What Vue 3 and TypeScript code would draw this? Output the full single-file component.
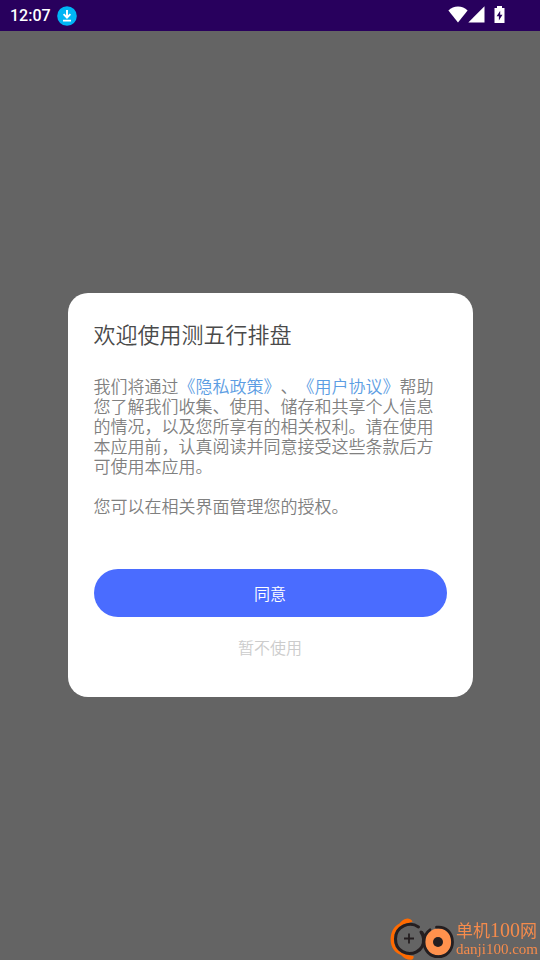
<script setup lang="ts">
import { ref } from 'vue'

const title = '欢迎使用测五行排盘'
const time = ref('12:07')
const open = ref(true)
</script>

<template>
  <div class="screen">
    <header class="status">
      <div class="status-group">
        <span class="time">{{ time }}</span>
        <svg class="download" viewBox="0 0 20 20" aria-hidden="true">
          <circle cx="10" cy="10" r="9.8" fill="#00b5f5" />
          <path d="M10 4v7M6.600 8.200L10 11.600l3.400-3.400M6 14.600h8" fill="none" stroke="#fff" stroke-width="1.900" />
        </svg>
      </div>
      <div class="status-group icons">
        <svg class="wifi" viewBox="0 0 20 17" aria-hidden="true">
          <path d="M10 16.500L.4 4.600C3 2 6.300 .6 10 .6s7 1.400 9.600 4z" fill="#fff" />
        </svg>
        <svg class="signal" viewBox="0 0 17 17" aria-hidden="true">
          <path d="M16.500 .3v16.200H.3z" fill="#fff" />
        </svg>
        <svg class="battery" viewBox="0 0 11 17" aria-hidden="true">
          <path d="M3 0h5v2h2.500v15H.5V2H3z" fill="#fff" />
          <path d="M6.200 4.800L2.600 10.300h2.300v4.200l3.600-5.700H6.200z" fill="#28005d" />
        </svg>
      </div>
    </header>

    <main class="backdrop">
      <section v-if="open" class="dialog" role="dialog" aria-labelledby="dialog-title">
        <h1 id="dialog-title">{{ title }}</h1>
        <p>我们将通过<a href="#privacy">《隐私政策》</a>、<a href="#terms">《用户协议》</a>帮助您了解我们收集、使用、储存和共享个人信息的情况，以及您所享有的相关权利。请在使用本应用前，认真阅读并同意接受这些条款后方可使用本应用。</p>
        <p>您可以在相关界面管理您的授权。</p>
        <button class="agree" type="button" @click="open = false">同意</button>
        <button class="decline" type="button" @click="open = false">暂不使用</button>
      </section>
    </main>

    <aside class="watermark">
      <svg class="logo" viewBox="0 0 66 42" aria-hidden="true">
        <path d="M22.500 3.500C20.500 .3 17.500 0 14.500 1.300 12.500 2.200 11 3.800 9.500 5.500 3.500 8.500 .6 14.500 .6 21.500c0 7.500 4.200 13.500 10.400 15.500 3.500 3.500 6.500 5 10 4.800 2-.2 3-1.800 2.500-3.800-2.500-.4-5.500-1-8.500-2C8 34 3.900 28.500 3.900 21.500c0-7 3.600-12.500 10.100-15.500 3-.9 6-1 8.500-2.500z" fill="#ff6a00" />
        <path d="M28.500 9C20 3 5.500 8 5.500 21c0 12 12 17.500 21 12.800C31 31.500 34 27 33.500 21c-.2-3-1.200-5.200-2.500-7" fill="none" stroke="#241e20" stroke-width="3" stroke-linecap="round" />
        <path d="M19 15.500v10M14 20.500h10" fill="none" stroke="#241e20" stroke-width="1.800" />
        <circle cx="48.500" cy="24" r="13.500" fill="#ff914d" />
        <path d="M46.500 9.200C56 8 62.500 15 62.500 24c0 8.300-6 14.700-14.300 14.700S34 32.300 34 24c0-5 2-9.500 6-12.200M32 14.500l2.500 4" fill="none" stroke="#241e20" stroke-width="2.800" stroke-linecap="round" />
        <circle cx="48" cy="24" r="5" fill="#241e20" />
      </svg>
      <div class="brand">
        <span class="brand-name">单机<span class="brand-number">100</span>网</span>
        <span class="brand-site">danji100.com</span>
      </div>
    </aside>
  </div>
</template>

<style>
body {
  margin: 0;
}
</style>

<style scoped>
.screen {
  display: flex;
  flex-direction: column;
  min-height: 100vh;
  background: #646464;
  font-family: 'Noto Sans CJK SC', sans-serif;
  font-weight: 350;
  text-spacing-trim: space-all;
}

.status {
  display: flex;
  align-items: center;
  justify-content: space-between;
  box-sizing: border-box;
  height: 31px;
  padding: 0 35px 0 10px;
  background: #28005d;
}

.status-group {
  display: flex;
  align-items: center;
  gap: 6px;
}

.icons {
  gap: 0;
  padding-bottom: 2px;
}

.time {
  color: #fff;
  font: 500 16px/31px Roboto, sans-serif;
}

.download {
  width: 20px;
  height: 20px;
}

.wifi {
  width: 20px;
  height: 17px;
}

.signal {
  width: 17px;
  height: 17px;
}

.battery {
  width: 11px;
  height: 17px;
  margin-left: 9px;
}

.backdrop {
  display: flex;
  flex: 1;
  align-items: center;
  justify-content: center;
  padding-bottom: 2px;
}

.dialog {
  display: flex;
  flex-direction: column;
  box-sizing: border-box;
  width: 75%;
  padding: 24px 26px 34px;
  border-radius: 20px;
  background: #fff;
}

h1 {
  margin: 0 0 27px;
  color: #4a4a4a;
  font-size: 22px;
  font-weight: inherit;
  line-height: 32px;
}

p {
  margin: 0 0 20px;
  color: #808080;
  font-size: 17px;
  line-height: 20px;
}

a {
  color: #5c9de3;
  text-decoration: none;
}

button {
  padding: 0;
  border: 0;
  background: none;
  font-family: inherit;
  font-size: 16px;
  font-weight: inherit;
  cursor: pointer;
}

.agree {
  height: 48px;
  margin-top: 33px;
  border-radius: 24px;
  background: #4a6cff;
  color: #fff;
}

.decline {
  align-self: center;
  height: 32px;
  margin-top: 14px;
  color: #ccc;
}

.watermark {
  position: fixed;
  right: 2px;
  bottom: 0;
  display: flex;
  align-items: center;
}

.logo {
  width: 66px;
  height: 42px;
}

.brand {
  display: flex;
  flex-direction: column;
  color: #f58b4c;
  white-space: nowrap;
}

.brand-name {
  font: 17px/20px 'Noto Sans CJK SC', sans-serif;
}

.brand-number {
  font: 20px/20px 'Liberation Serif', serif;
}

.brand-site {
  font: 15px/18px 'Liberation Serif', serif;
}
</style>
